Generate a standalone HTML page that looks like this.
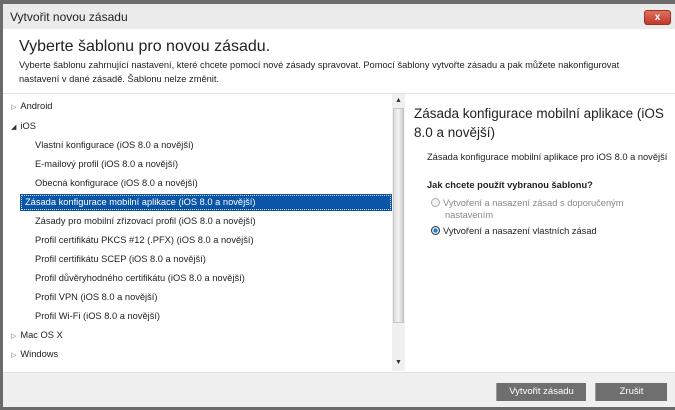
<!DOCTYPE html>
<html><head><meta charset="utf-8"><style>
*{margin:0;padding:0;box-sizing:border-box}
body{width:675px;height:410px;overflow:hidden;background:#6b6b6b;font-family:"Liberation Sans",sans-serif;color:#222;position:relative}
.win{position:absolute;left:3px;top:4px;width:672px;height:403px;background:#fff}
.tb{position:absolute;left:0;top:0;width:672px;height:25px;background:#ebebeb;font-size:12px;padding:6px 0 0 7px;color:#222}
.close{position:absolute;left:641px;top:6px;width:27px;height:15px;border-radius:3px;background:linear-gradient(#e0705e,#c0392b);border:1px solid #a03020;color:#fff;font-weight:bold;font-size:10px;text-align:center;line-height:13px}
h1{position:absolute;left:16px;top:34px;font-weight:normal;font-size:16px;color:#222}
.desc{position:absolute;left:16px;top:54px;font-size:9.3px;line-height:14px;width:640px;color:#222}
.sep{position:absolute;left:0;top:89px;width:672px;height:1px;background:#e3e3e3}
.tree{position:absolute;left:0;top:90px;width:389px;height:277px;font-size:9.3px}
.it{position:absolute;height:17px;line-height:17px;white-space:nowrap}
.sel{background:#0a55a8;color:#fff;outline:1px dotted #cfd8e8;outline-offset:-2px;padding-left:5px}
.tri{font-size:7px;color:#777;margin-right:4px}
.sb{position:absolute;left:389px;top:90px;width:13px;height:277px;background:#f0f0f0}
.thumb{position:absolute;left:1px;top:14px;width:11px;height:215px;background:linear-gradient(90deg,#ddd,#f4f4f4 50%,#ccc);border:1px solid #c8c8c8}
.rp{position:absolute;left:411px;top:100px;font-size:13.5px;line-height:19px;width:260px;color:#222}
.foot{position:absolute;left:0;top:368px;width:672px;height:35px;background:#f0f0f0;border-top:1px solid #e0e0e0}
.btn{position:absolute;top:10px;height:18px;background:#6f6f6f;color:#fff;font-size:9.5px;text-align:center;line-height:18px;border-left:1px solid #999}
.rad{display:inline-block;width:9px;height:9px;border-radius:50%;border:1px solid #aaa;vertical-align:-1px;margin-right:3px;background:#f4f4f4}
</style></head><body>
<div class="win">
<div class="tb">Vytvořit novou zásadu<div class="close">x</div></div>
<h1>Vyberte šablonu pro novou zásadu.</h1>
<div class="desc">Vyberte šablonu zahrnující nastavení, které chcete pomocí nové zásady spravovat. Pomocí šablony vytvořte zásadu a pak můžete nakonfigurovat nastavení v dané zásadě. Šablonu nelze změnit.</div>
<div class="sep"></div>
<div class="tree">
<div class="it" style="left:8px;top:4px"><span class="tri">▷</span>Android</div>
<div class="it" style="left:8px;top:24px"><span class="tri" style="color:#333">◢</span>iOS</div>
<div class="it" style="left:32px;top:43px">Vlastní konfigurace (iOS 8.0 a novější)</div>
<div class="it" style="left:32px;top:62px">E-mailový profil (iOS 8.0 a novější)</div>
<div class="it" style="left:32px;top:81px">Obecná konfigurace (iOS 8.0 a novější)</div>
<div class="it sel" style="left:17px;top:100px;width:372px">Zásada konfigurace mobilní aplikace (iOS 8.0 a novější)</div>
<div class="it" style="left:32px;top:119px">Zásady pro mobilní zřizovací profil (iOS 8.0 a novější)</div>
<div class="it" style="left:32px;top:138px">Profil certifikátu PKCS #12 (.PFX) (iOS 8.0 a novější)</div>
<div class="it" style="left:32px;top:157px">Profil certifikátu SCEP (iOS 8.0 a novější)</div>
<div class="it" style="left:32px;top:176px">Profil důvěryhodného certifikátu (iOS 8.0 a novější)</div>
<div class="it" style="left:32px;top:195px">Profil VPN (iOS 8.0 a novější)</div>
<div class="it" style="left:32px;top:214px">Profil Wi-Fi (iOS 8.0 a novější)</div>
<div class="it" style="left:8px;top:233px"><span class="tri">▷</span>Mac OS X</div>
<div class="it" style="left:8px;top:252px"><span class="tri">▷</span>Windows</div>
</div>
<div class="sb"><div style="position:absolute;left:3px;top:3px;font-size:7px;color:#333">▲</div><div class="thumb"></div><div style="position:absolute;left:3px;top:265px;font-size:7px;color:#333">▼</div></div>
<div class="rp">Zásada konfigurace mobilní aplikace (iOS 8.0 a novější)</div>
<div style="position:absolute;left:424px;top:148px;font-size:9.3px">Zásada konfigurace mobilní aplikace pro iOS 8.0 a novější</div>
<div style="position:absolute;left:424px;top:176px;font-size:9.3px;font-weight:bold">Jak chcete použít vybranou šablonu?</div>
<div style="position:absolute;left:428px;top:193px;font-size:9.3px;color:#888;line-height:12px;width:240px"><span class="rad"></span>Vytvoření a nasazení zásad s doporučeným<br><span style="margin-left:14px">nastavením</span></div>
<div style="position:absolute;left:428px;top:222px;font-size:9.3px"><span class="rad" style="border-color:#333;background:radial-gradient(#1e7fd8 40%,#cfe6fb 45%)"></span>Vytvoření a nasazení vlastních zásad</div>
<div class="foot">
<div class="btn" style="left:493px;width:90px">Vytvořit zásadu</div>
<div class="btn" style="left:592px;width:72px">Zrušit</div>
</div>
</div>
</body></html>
